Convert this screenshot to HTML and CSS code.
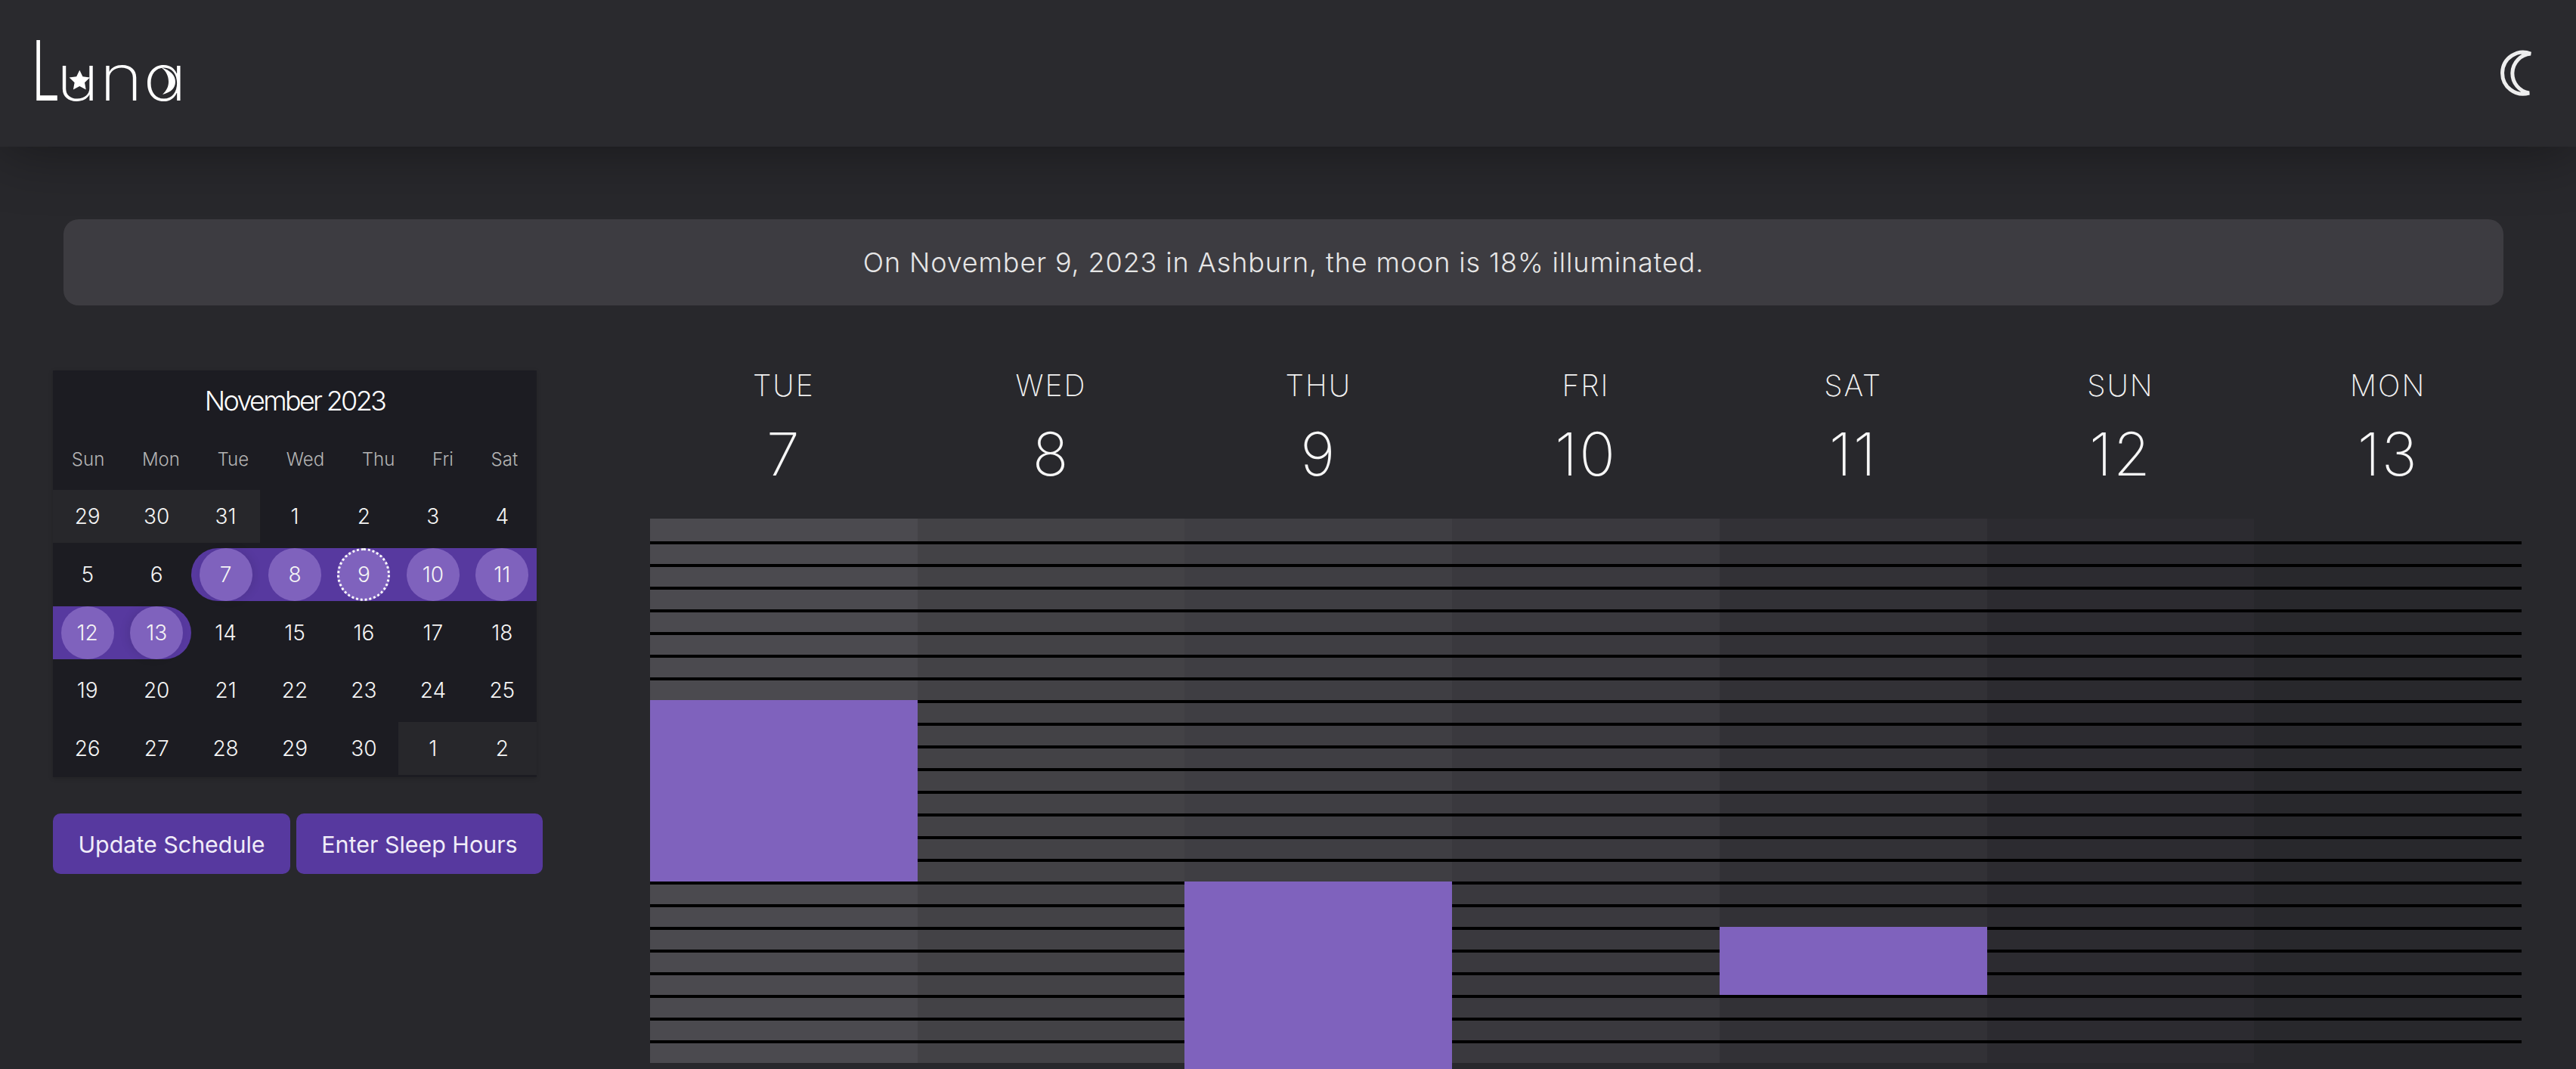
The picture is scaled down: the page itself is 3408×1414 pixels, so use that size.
FILE: index.html
```html
<!DOCTYPE html>
<html lang="en">
<head>
    <meta charset="UTF-8">
    <meta name="viewport" content="width=device-width, initial-scale=1.0">
    <title>Luna</title>
    <link rel="stylesheet" href="styles.css">
</head>
<body>
    <header class="topbar">
        <div class="logo">
            <span class="logo-cap">L</span><span class="logo-low">una</span>
            <svg class="logo-marks" viewBox="0 0 200 60" aria-hidden="true">
                <!-- star in the u, crescent in the a -->
                <polygon points="57.3,2.7 61.4,11.3 71,12.6 64,19.2 65.7,28.6 57.3,24 48.9,28.6 50.6,19.2 43.6,12.6 53.2,11.3"/>
                <path d="M165 -1 C178 3 184 10 184 18 C184 27 178 32 167 35 C173 29 175 24 175 18 C175 11 172 4 165 -1 Z"/>
            </svg>
        </div>
        <button class="theme-toggle" aria-label="Toggle theme">
            <svg viewBox="0 0 60 64" width="60" height="64" aria-hidden="true">
                <path d="M52 6 A27.5 27.5 0 1 0 50 58 A26.2 26.2 0 0 1 52 6 Z"/>
            </svg>
        </button>
    </header>

    <main class="page">
        <div class="moon-banner">On November 9, 2023 in Ashburn, the moon is 18% illuminated.</div>

        <div class="content">
            <aside class="sidebar">
                <section class="calendar">
                    <div class="cal-title">November 2023</div>
                    <div class="cal-weekdays">
                        <span>Sun</span><span>Mon</span><span>Tue</span><span>Wed</span><span>Thu</span><span>Fri</span><span>Sat</span>
                    </div>
                    <div class="cal-grid">
                        <div class="cal-day other">29</div>
                        <div class="cal-day other">30</div>
                        <div class="cal-day other">31</div>
                        <div class="cal-day">1</div>
                        <div class="cal-day">2</div>
                        <div class="cal-day">3</div>
                        <div class="cal-day">4</div>

                        <div class="cal-day">5</div>
                        <div class="cal-day">6</div>
                        <div class="cal-day range range-start"><span class="dot">7</span></div>
                        <div class="cal-day range"><span class="dot">8</span></div>
                        <div class="cal-day range"><span class="dot today">9</span></div>
                        <div class="cal-day range"><span class="dot">10</span></div>
                        <div class="cal-day range"><span class="dot">11</span></div>

                        <div class="cal-day range"><span class="dot">12</span></div>
                        <div class="cal-day range range-end"><span class="dot">13</span></div>
                        <div class="cal-day">14</div>
                        <div class="cal-day">15</div>
                        <div class="cal-day">16</div>
                        <div class="cal-day">17</div>
                        <div class="cal-day">18</div>

                        <div class="cal-day">19</div>
                        <div class="cal-day">20</div>
                        <div class="cal-day">21</div>
                        <div class="cal-day">22</div>
                        <div class="cal-day">23</div>
                        <div class="cal-day">24</div>
                        <div class="cal-day">25</div>

                        <div class="cal-day">26</div>
                        <div class="cal-day">27</div>
                        <div class="cal-day">28</div>
                        <div class="cal-day">29</div>
                        <div class="cal-day">30</div>
                        <div class="cal-day other">1</div>
                        <div class="cal-day other">2</div>
                    </div>
                </section>

                <div class="actions">
                    <button class="btn btn-update">Update Schedule</button>
                    <button class="btn btn-sleep">Enter Sleep Hours</button>
                </div>
            </aside>

            <section class="schedule">
                <div class="day-col">
                    <div class="day-name">TUE</div>
                    <div class="day-num">7</div>
                    <div class="track shade-1">
                        <div class="lines"></div>
                        <div class="sleep" style="top: 240px; height: 240px"></div>
                    </div>
                </div>
                <div class="day-col">
                    <div class="day-name">WED</div>
                    <div class="day-num">8</div>
                    <div class="track shade-2"><div class="lines"></div></div>
                </div>
                <div class="day-col">
                    <div class="day-name">THU</div>
                    <div class="day-num">9</div>
                    <div class="track shade-3">
                        <div class="lines"></div>
                        <div class="sleep" style="top: 480px; height: 270px"></div>
                    </div>
                </div>
                <div class="day-col">
                    <div class="day-name">FRI</div>
                    <div class="day-num">10</div>
                    <div class="track shade-4"><div class="lines"></div></div>
                </div>
                <div class="day-col">
                    <div class="day-name">SAT</div>
                    <div class="day-num">11</div>
                    <div class="track shade-5">
                        <div class="lines"></div>
                        <div class="sleep" style="top: 540px; height: 90px"></div>
                    </div>
                </div>
                <div class="day-col">
                    <div class="day-name">SUN</div>
                    <div class="day-num">12</div>
                    <div class="track shade-6"><div class="lines"></div></div>
                </div>
                <div class="day-col">
                    <div class="day-name">MON</div>
                    <div class="day-num">13</div>
                    <div class="track"><div class="lines"></div></div>
                </div>
            </section>
        </div>
    </main>
</body>
</html>
```

FILE: styles.css
```css
html, body {
    margin: 0;
    padding: 0;
    height: 100%;
    overflow: hidden;
}

body {
    background-color: #28282c;
    color: #fff;
    font-family: 'Inter', 'Liberation Sans', sans-serif;
}

/* Top bar */
.topbar {
    display: flex;
    justify-content: space-between;
    align-items: center;
    height: 194px;
    padding: 0 52px 0 38px;
    box-sizing: border-box;
    background-color: #2a2a2e;
    box-shadow: 0 4px 80px rgba(0, 0, 0, 0.4);
}

.logo {
    position: relative;
    display: flex;
    align-items: baseline;
    height: 80px;
    margin-bottom: 8px;
    font-weight: 200;
    font-feature-settings: "cv11";
    line-height: 80px;
    color: #fff;
}

.logo-cap {
    margin: 0 -30px 0 4px;
    font-size: 110px;
    font-weight: 300;
    transform: scaleX(0.6);
    transform-origin: left;
}

.logo-low {
    font-size: 85px;
    transform: scaleX(1.155);
    transform-origin: left;
}

.logo-marks {
    position: absolute;
    top: 37px;
    left: 10px;
    width: 200px;
    height: 60px;
    overflow: visible;
    fill: #fff;
}

.theme-toggle {
    display: flex;
    padding: 0;
    border: none;
    background: none;
    cursor: pointer;
}

.theme-toggle svg {
    fill: none;
    stroke: #eeeeee;
    stroke-width: 5;
}

/* Page body */
.page {
    padding: 96px 72px 0 70px;
}

.moon-banner {
    height: 114px;
    margin: 0 24px 0 14px;
    border-radius: 20px;
    background-color: #3d3c41;
    font-size: 36px;
    font-weight: 300;
    letter-spacing: 0.87px;
    line-height: 114px;
    text-align: center;
    color: #e6e6e6;
}

.content {
    display: flex;
    gap: 142px;
    margin-top: 86px;
}

/* Calendar */
.sidebar {
    flex: 0 0 648px;
}

.calendar {
    width: 640px;
    padding-bottom: 3px;
    background-color: #1c1c22;
    box-shadow: 0 2px 6px rgba(0, 0, 0, 0.15);
}

.cal-title {
    height: 80px;
    font-size: 36px;
    font-weight: 300;
    letter-spacing: -2.7px;
    line-height: 80px;
    text-align: center;
}

.cal-weekdays {
    display: flex;
    justify-content: space-around;
    align-items: center;
    height: 74px;
    margin-bottom: 4px;
    font-size: 24px;
    font-weight: 300;
    color: #b4b4b4;
}

.cal-grid {
    display: grid;
    grid-template-columns: repeat(7, 1fr);
    grid-auto-rows: 70px;
    row-gap: 6.75px;
}

.cal-day {
    display: flex;
    justify-content: center;
    align-items: center;
    font-size: 28px;
    font-weight: 300;
    color: #f5f5f5;
}

.cal-day.other {
    background-color: #27272b;
}

.cal-day.range {
    background-color: #57399f;
}

.cal-day.range-start {
    border-radius: 36px 0 0 36px;
}

.cal-day.range-end {
    border-radius: 0 36px 36px 0;
}

.dot {
    display: flex;
    justify-content: center;
    align-items: center;
    width: 70px;
    height: 70px;
    border-radius: 50%;
    box-sizing: border-box;
    background-color: #7f62bd;
}

.range-start .dot {
    box-shadow: 4px 0 12px rgba(0, 0, 0, 0.08);
}

.range-end .dot {
    box-shadow: -4px 0 12px rgba(0, 0, 0, 0.08);
}

.dot.today {
    border: 3px dotted #ffffff;
}

/* Buttons */
.actions {
    display: flex;
    gap: 8px;
    margin-top: 48px;
}

.btn {
    height: 80px;
    padding: 2px 0 0;
    border: none;
    border-radius: 10px;
    background-color: #57399f;
    font-family: inherit;
    font-size: 30.4px;
    font-weight: 400;
    color: #f0ecf8;
    cursor: pointer;
}

.btn-update {
    width: 314px;
}

.btn-sleep {
    width: 326px;
}

/* Week schedule */
.schedule {
    flex: 1;
    display: grid;
    grid-template-columns: repeat(7, 1fr);
}

.day-col {
    text-align: center;
}

.day-name {
    height: 62px;
    font-size: 39px;
    font-weight: 200;
    letter-spacing: 2px;
    line-height: 40px;
    color: #f2f2f2;
}

.day-num {
    height: 134px;
    font-size: 79px;
    font-weight: 200;
    letter-spacing: 2px;
    line-height: 96px;
    color: #f7f7f7;
}

.track {
    position: relative;
    height: 720px;
}

.lines {
    position: relative;
    top: 30px;
    height: 690px;
    background: repeating-linear-gradient(to bottom, #000 0, #000 4px, transparent 4px, transparent 30px);
}

.shade-1 { background-color: #4b4a4f; }
.shade-2 { background-color: #434246; }
.shade-3 { background-color: #3f3e43; }
.shade-4 { background-color: #3a393e; }
.shade-5 { background-color: #323136; }
.shade-6 { background-color: #2c2b30; }

.sleep {
    position: absolute;
    left: 0;
    right: 0;
    background-color: #7f62bd;
}
```
